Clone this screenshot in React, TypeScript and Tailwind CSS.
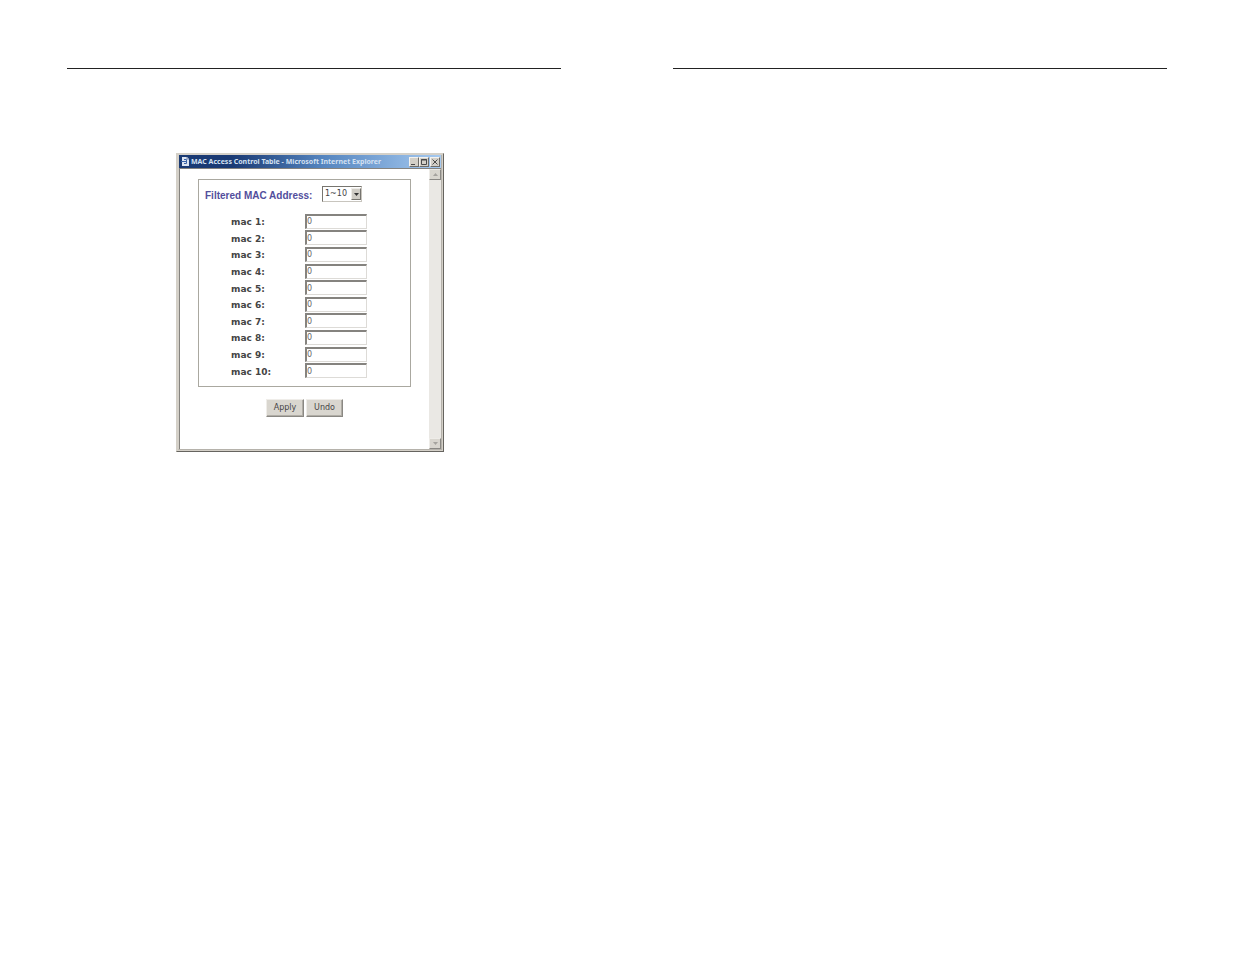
import type { ReactNode } from 'react';

function CaptionButton({ label, children }: { label: string; children: ReactNode }) {
  return (
    <button
      type="button"
      aria-label={label}
      className="flex h-[10px] w-[10px] items-center justify-center border border-t-[#f4f2ee] border-l-[#f4f2ee] border-r-[#6e6c68] border-b-[#6e6c68] bg-[#d4d0c8]"
    >
      <svg viewBox="0 0 8 8" className="h-2 w-2 shrink-0" fill="none" stroke="#4a4a4a" strokeWidth="1">
        {children}
      </svg>
    </button>
  );
}

function ScrollButton({ label, path }: { label: string; path: string }) {
  return (
    <button
      type="button"
      aria-label={label}
      className="flex h-[11px] w-full items-center justify-center border border-t-[#eeece8] border-l-[#eeece8] border-r-[#8a8884] border-b-[#8a8884] bg-[#d9d6cf]"
    >
      <svg viewBox="0 0 5 3" className="h-[3px] w-[5px]" fill="#a5a39e">
        <path d={path} />
      </svg>
    </button>
  );
}

function TitleBar() {
  return (
    <div className="flex h-[13px] items-center bg-linear-to-r from-[#1a3a74] from-20% via-[#5585bf] via-55% to-[#a6caf0] pr-px pl-[2px]">
      <svg viewBox="0 0 10 11" className="h-[11px] w-[10px] shrink-0">
        <path d="M1 1h5l2 2v7H1z" fill="#dde5f2" />
        <path d="M0 5.5h5M3 3.5h2.5v4H3" fill="none" stroke="#3c64a8" strokeWidth="1" />
        <path d="M6 1v2h2" fill="none" stroke="#7c8cb0" strokeWidth="1" />
      </svg>
      <h1 className="flex-1 font-['Noto_Sans',sans-serif] text-[7px] leading-[12px] font-bold whitespace-nowrap text-[#d3e0f2]">
        MAC Access Control Table - Microsoft Internet Explorer
      </h1>
      <div className="flex">
        <CaptionButton label="Minimize">
          <path d="M1 6.5h4" />
        </CaptionButton>
        <CaptionButton label="Maximize">
          <path d="M1.5 1.5h5v5h-5zM1 2h6" />
        </CaptionButton>
        <div className="ml-px">
          <CaptionButton label="Close">
            <path d="M1.5 1.5l5 5M6.5 1.5l-5 5" />
          </CaptionButton>
        </div>
      </div>
    </div>
  );
}

function MacForm() {
  const entries = Array.from({ length: 10 }, (_, i) => i + 1);
  const buttonStyle =
    'h-[18px] border border-t-[#efede9] border-l-[#efede9] border-r-[#8a8883] border-b-[#8a8883] bg-[#d9d6cf] text-[8px] leading-[14px] text-[#444] shadow-[inset_-1px_-1px_0_#b0ada6]';

  return (
    <form className="flex-1 pt-[10px] pr-[18px] pb-8 pl-[18px]" onSubmit={(e) => e.preventDefault()}>
      <div className="border border-[#aaa8a0] pt-[5px] pb-[7px] pl-[6px]">
        <div className="flex items-center">
          <label
            htmlFor="range"
            className="w-[117px] pt-1 font-['Liberation_Sans',sans-serif] text-[10px] leading-[14px] font-bold whitespace-nowrap text-[#524e9c]"
          >
            Filtered MAC Address:
          </label>
          <div className="relative">
            <select
              id="range"
              defaultValue="1"
              className="block h-4 w-10 appearance-none border border-t-[#77756f] border-l-[#77756f] border-r-[#c8c5be] border-b-[#c8c5be] bg-white pl-[2px] text-[8px] leading-[12px] text-[#444]"
            >
              <option value="1">1~10</option>
              <option value="11">11~20</option>
              <option value="21">21~30</option>
              <option value="31">31~32</option>
            </select>
            <span className="pointer-events-none absolute top-[2px] right-px flex h-3 w-[10px] items-center justify-center border border-t-[#eeece8] border-l-[#eeece8] border-r-[#76746f] border-b-[#76746f] bg-[#cfccc5]">
              <svg viewBox="0 0 5 3" className="h-[3px] w-[5px]" fill="#333">
                <path d="M0 0h5L2.5 3z" />
              </svg>
            </span>
          </div>
        </div>

        <div className="mt-[10px] flex h-[166px] flex-col">
          {entries.map((n) => (
            <div key={n} className="flex flex-1 items-center pl-[26px]">
              <label htmlFor={`mac${n}`} className="w-[74px] pt-[2px] text-[9px] leading-[12px] font-bold text-[#444]">
                mac {n}:
              </label>
              <input
                id={`mac${n}`}
                type="text"
                defaultValue="0"
                className="h-[15px] w-[62px] border border-t-2 border-l-2 border-t-[#85837f] border-l-[#85837f] border-r-[#dddbd7] border-b-[#dddbd7] bg-white text-[8px] leading-[12px] text-[#666]"
              />
            </div>
          ))}
        </div>
      </div>

      <div className="mt-3 flex gap-[2px] pl-[68px]">
        <button type="submit" className={`${buttonStyle} w-[38px]`}>
          Apply
        </button>
        <button type="reset" className={`${buttonStyle} w-[37px]`}>
          Undo
        </button>
      </div>
    </form>
  );
}

function BrowserWindow() {
  return (
    <section className="w-[268px] border border-t-[#d4d0c8] border-l-[#d4d0c8] border-r-[#66645f] border-b-[#66645f] bg-[#d4d0c8] p-px font-['DejaVu_Sans',sans-serif]">
      <div className="border border-t-0 border-r-[#b5b2ab] border-b-[#b5b2ab] border-l-[#d4d0c8]">
        <TitleBar />
        <div className="flex border-t border-l border-[#85837f] bg-white">
          <MacForm />
          <div className="flex w-[12px] flex-col justify-between bg-[#eae8e4]">
            <ScrollButton label="Scroll up" path="M0 3h5L2.5 0z" />
            <ScrollButton label="Scroll down" path="M0 0h5L2.5 3z" />
          </div>
        </div>
      </div>
    </section>
  );
}

export default function App() {
  return (
    <main className="flex min-h-screen gap-28 bg-white pt-[68px] pr-[68px] pl-[67px]">
      <div className="flex-1">
        <hr className="border-[#222]" />
        <div className="pt-[84px] pl-[109px]">
          <BrowserWindow />
        </div>
      </div>
      <div className="flex-1">
        <hr className="border-[#222]" />
      </div>
    </main>
  );
}
